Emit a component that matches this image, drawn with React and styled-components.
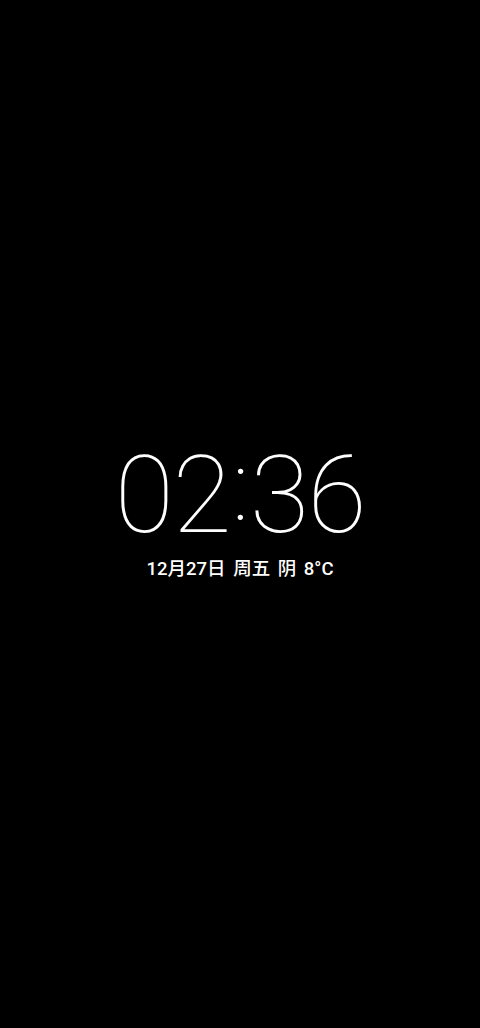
import React from 'react';
import styled, { createGlobalStyle } from 'styled-components';

const GlobalStyle = createGlobalStyle`
    html, body {
        margin: 0;
        padding: 0;
        background: #000;
    }
    #root {
        height: 1028px;
    }
`;

const Screen = styled.main`
    width: 480px;
    height: 1028px;
    background: #000;
    display: flex;
    flex-direction: column;
    align-items: center;
    padding-top: 441px;
    box-sizing: border-box;
`;

const Clock = styled.div`
    font-family: Roboto, "Noto Sans", sans-serif;
    font-weight: 100;
    font-size: 108px;
    line-height: 108px;
    color: #fff;
    letter-spacing: -1.5px;
`;

// colon sits centred on the digits, a bit higher and tighter than the font puts it
const Colon = styled.span`
    display: inline-block;
    font-size: 98px;
    line-height: 0;
    margin: 0 2px;
    transform: translateY(-12px);
`;

const DateLine = styled.div`
    margin-top: 8px;
    font-family: Roboto, "Noto Sans CJK SC", sans-serif;
    font-weight: 500;
    font-size: 18.5px;
    line-height: 24px;
    color: #fff;
    word-spacing: 3px;
`;

const App = () => {
    return (
        <Screen>
            <GlobalStyle />
            <Clock>
                02<Colon>:</Colon>36
            </Clock>
            <DateLine>12月27日 周五 阴 8°C</DateLine>
        </Screen>
    );
};

export default App;
